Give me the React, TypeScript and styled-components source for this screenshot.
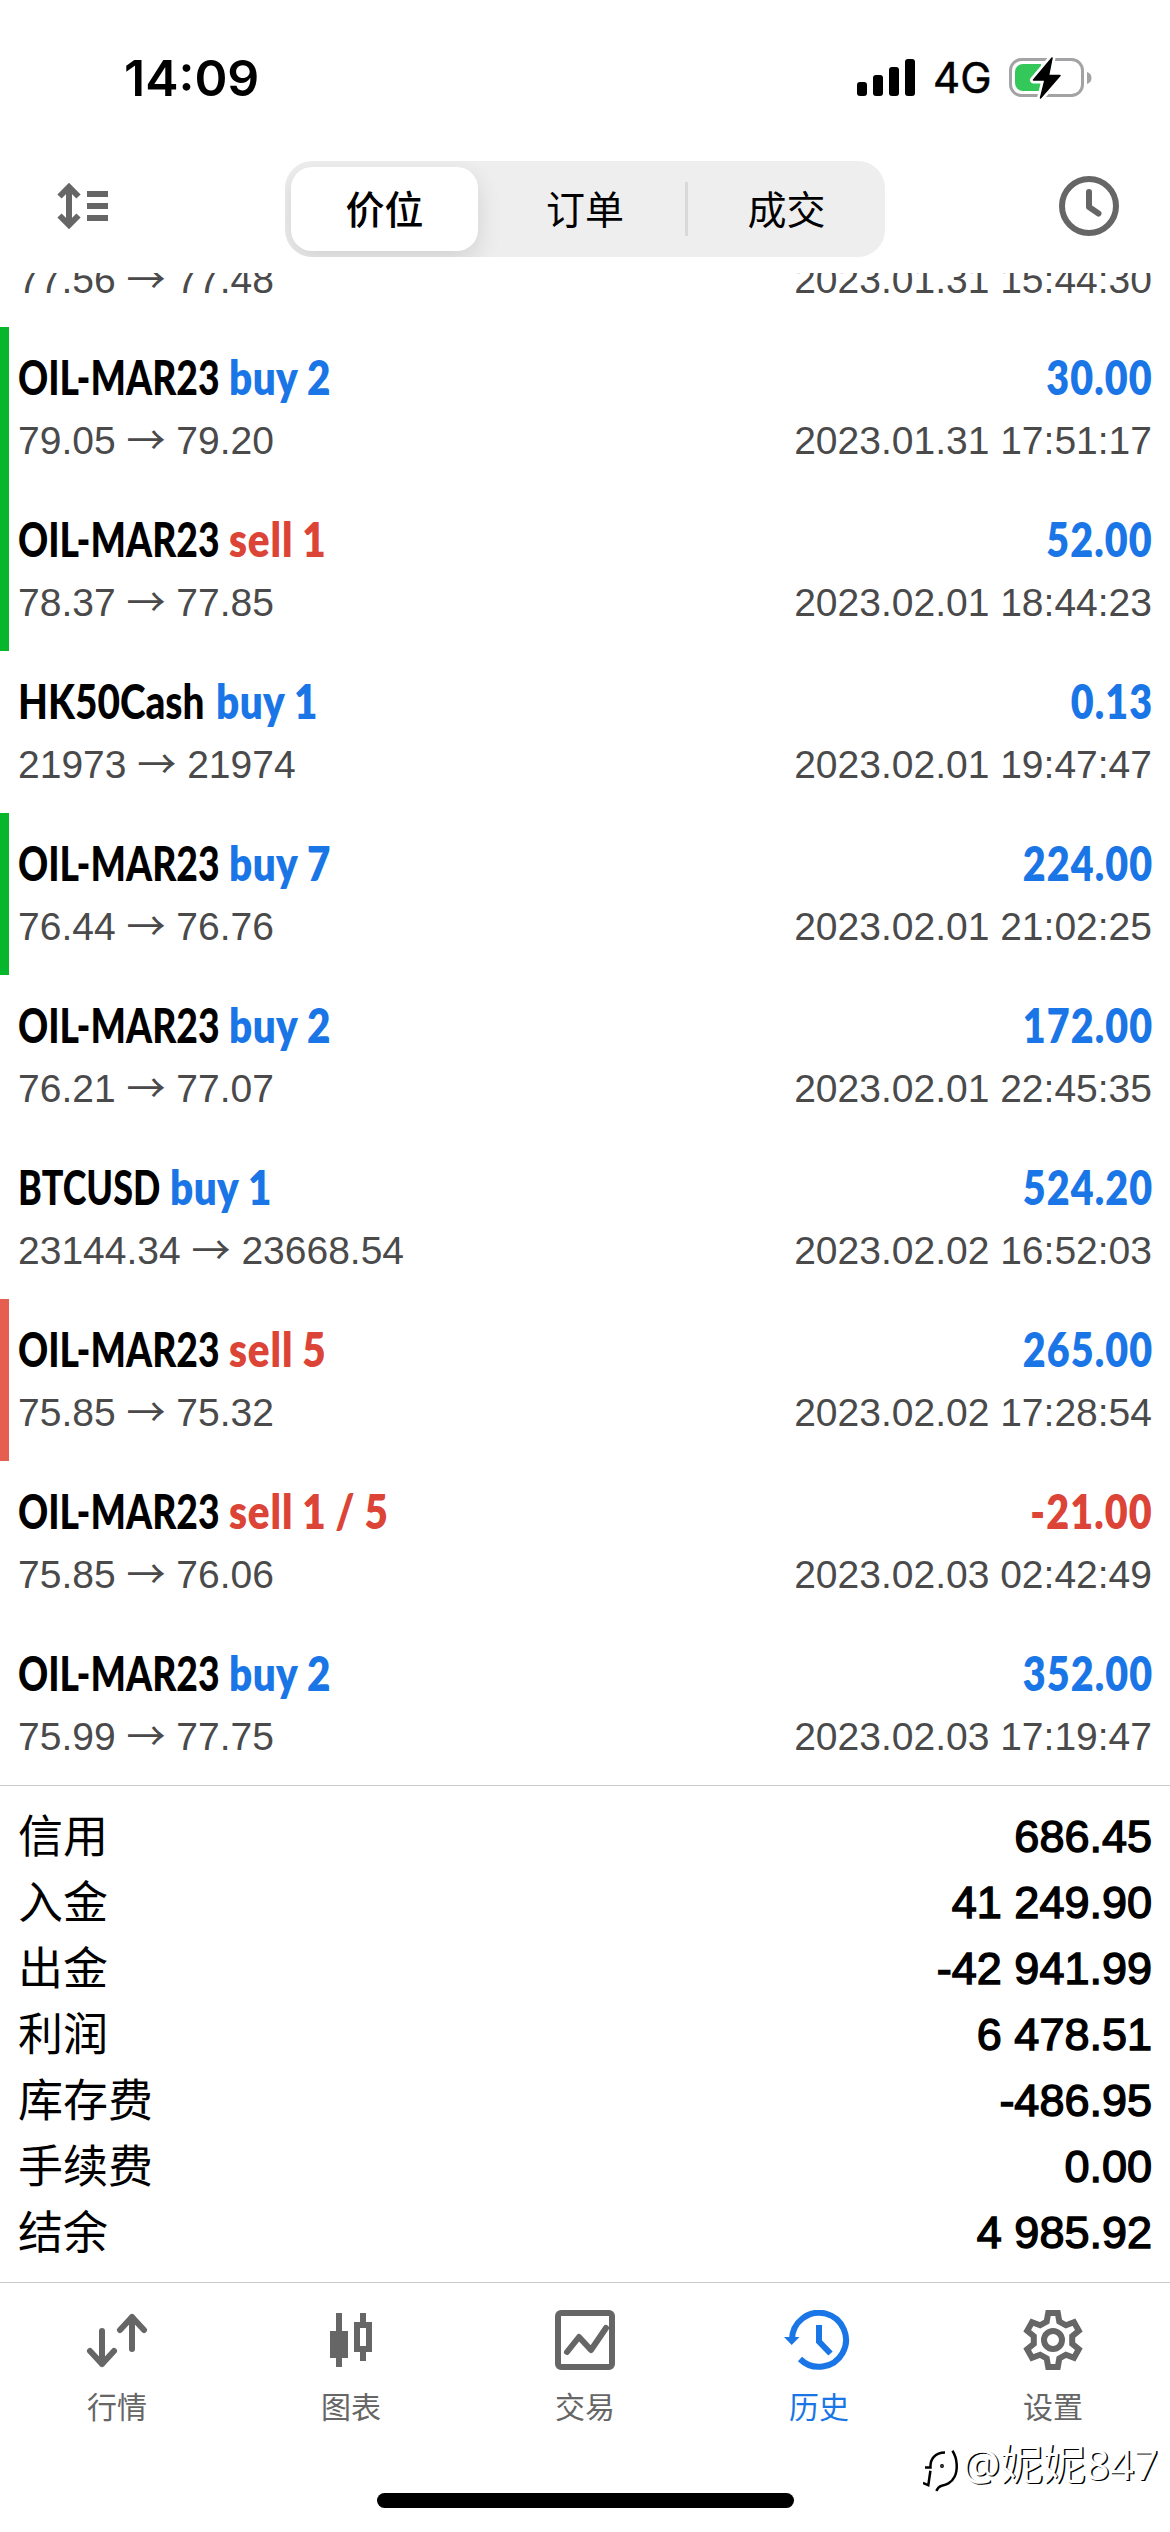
import React from 'react';
import styled, { createGlobalStyle } from 'styled-components';

const BLUE = '#1a76e6';
const RED = '#db4437';
const GREY = '#666666';
const CJK = '"Noto Sans CJK SC", sans-serif';
const HELV = '"Liberation Sans", "Noto Sans CJK SC", sans-serif';

const GlobalStyle = createGlobalStyle`
  * { box-sizing: border-box; }
  body { margin: 0; background: #fff; }
`;

const Screen = styled.div`
  position: relative;
  display: flex;
  flex-direction: column;
  width: 1170px;
  height: 2532px;
  overflow: hidden;
  background: #fff;
  color: #000;
  font-family: ${HELV};
`;

const StatusBar = styled.header`
  display: flex;
  justify-content: space-between;
  align-items: center;
  height: 156px;
  padding: 0 78px 0 124px;
  flex: none;
`;

const Clock = styled.div`
  font: 600 50px/60px Inter, sans-serif;
`;

const StatusIcons = styled.div`
  display: flex;
  align-items: center;
  gap: 18px;
`;

const Network = styled.span`
  width: 58px;
  font: 400 42px/52px Inter, sans-serif;
  -webkit-text-stroke: 0.5px #000;
`;

const Toolbar = styled.div`
  display: grid;
  grid-template-columns: 228px 600px 1fr;
  align-items: center;
  height: 117px;
  padding: 0 51px 11px 57px;
  flex: none;
`;

const ToolButton = styled.button<{ $end?: boolean }>`
  display: flex;
  justify-self: ${p => (p.$end ? 'end' : 'start')};
  margin: 0 0 6px;
  padding: 0;
  border: 0;
  background: none;
`;

const Segments = styled.div`
  display: flex;
  width: 600px;
  height: 96px;
  border-radius: 27px;
  background: #eeeeef;
  overflow: hidden;
  align-items: center;
`;

const Segment = styled.button<{ $active?: boolean; $divided?: boolean }>`
  display: flex;
  align-items: center;
  justify-content: center;
  width: ${p => (p.$active ? 187 : 200)}px;
  height: ${p => (p.$active ? 84 : 54)}px;
  margin: 0 ${p => (p.$active ? 7 : 0)}px 0 ${p => (p.$active ? 6 : 0)}px;
  padding: 0 0 3px;
  border: 0;
  border-left: ${p => (p.$divided ? '3px solid #d9d9da' : '0')};
  border-radius: ${p => (p.$active ? 21 : 0)}px;
  background: ${p => (p.$active ? '#fff' : 'transparent')};
  box-shadow: ${p => (p.$active ? '0 9px 24px rgba(0,0,0,.12)' : 'none')};
  color: #000;
  font: ${p => (p.$active ? 500 : 400)} 39px/51px ${CJK};
`;

const Deals = styled.main`
  display: flex;
  flex-direction: column;
  height: 1512px;
  overflow: hidden;
  flex: none;
`;

const Deal = styled.article<{ $mark?: string }>`
  display: flex;
  flex-direction: column;
  height: 162px;
  flex: none;
  padding: 20px 18px 0 9px;
  border-left: 9px solid ${p => p.$mark || 'transparent'};
`;

const ScrolledDeal = styled.article`
  display: flex;
  flex-direction: column;
  height: 54px;
  flex: none;
  padding: 0 18px;
  margin-top: -27px;
  margin-bottom: 27px;
`;

const DealHead = styled.div`
  display: flex;
  align-items: baseline;
  height: 60px;
  font: 900 47px/60px Lato, sans-serif;
  white-space: pre;
`;

const Symbol = styled.span<{ $width: number; $scale: number }>`
  width: ${p => p.$width}px;
  transform: scaleX(${p => p.$scale});
  transform-origin: left;
`;

const Side = styled.span<{ $sell: boolean }>`
  flex: 1;
  transform: scaleX(0.86);
  transform-origin: left;
  letter-spacing: ${p => (p.$sell ? 1 : 0.5)}px;
  word-spacing: ${p => (p.$sell ? -1.5 : 0)}px;
  font-weight: 800;
  color: ${p => (p.$sell ? RED : BLUE)};
`;

const Profit = styled.span<{ $loss: boolean }>`
  transform: scaleX(0.84);
  transform-origin: right;
  margin-right: -1px;
  letter-spacing: 1.3px;
  font-weight: 800;
  color: ${p => (p.$loss ? RED : BLUE)};
`;

const DealInfo = styled.div`
  display: flex;
  justify-content: space-between;
  height: 50px;
  margin-top: 9px;
  font: 400 39px/50px ${HELV};
  color: #4a4a4b;
`;

const Arrow = styled.span`
  font-family: ${CJK};
  line-height: 0;
`;

const Summary = styled.section`
  display: flex;
  flex-direction: column;
  height: 497px;
  padding: 18px 18px 0;
  border-top: 1px solid #c8cacc;
  flex: none;
`;

const SummaryRow = styled.div`
  display: flex;
  justify-content: space-between;
  height: 66px;
  line-height: 66px;
  font-size: 45px;
`;

const SummaryLabel = styled.span`
  line-height: 60px;
  font-family: ${CJK};
`;

const SummaryValue = styled.span`
  -webkit-text-stroke: 1.4px #000;
`;

const TabBar = styled.nav`
  display: flex;
  height: 250px;
  border-top: 1px solid #c8cacc;
  flex: none;
`;

const Tab = styled.button<{ $active?: boolean }>`
  display: flex;
  flex-direction: column;
  align-items: center;
  width: 234px;
  padding: 27px 0 0;
  border: 0;
  background: none;
  color: ${p => (p.$active ? BLUE : GREY)};
  font: 400 30px/40px ${CJK};
`;

const TabLabel = styled.span`
  margin-top: 15px;
`;

const HomeIndicator = styled.div`
  position: absolute;
  left: 377px;
  bottom: 24px;
  width: 417px;
  height: 15px;
  border-radius: 8px;
  background: #000;
`;

const Watermark = styled.div`
  position: absolute;
  left: 923px;
  bottom: 38px;
  display: flex;
  align-items: flex-end;
  gap: 2px;
  color: #fff;
  font: 400 42.500px/60px "Noto Sans", ${CJK};
  text-shadow: 1.5px 1px 0 #000;
`;

const SignalIcon = () => (
  <svg width="58" height="38" viewBox="0 0 58 38">
    <rect x="0" y="23" width="10" height="14" rx="3" />
    <rect x="16" y="16" width="10" height="21" rx="3" />
    <rect x="32" y="8" width="10" height="29" rx="3" />
    <rect x="48" y="0" width="10" height="37" rx="3" />
  </svg>
);

const BatteryIcon = () => (
  <svg width="83" height="42" viewBox="0 0 83 42">
    <rect x="1.5" y="2.5" width="72" height="36" rx="11" fill="none" stroke="#a3a3a5" strokeWidth="3" />
    <path d="M78 15c3 1 4.500 3 4.500 6s-1.500 5-4.500 6z" fill="#a3a3a5" />
    <path d="M14 7h18v27H14a8 8 0 0 1-8-8V15a8 8 0 0 1 8-8z" fill="#34c759" />
    <path d="M43 1L24.500 23H36L31.500 41L51 18.500H39.500L43 1z" fill="#000" stroke="#fff" strokeWidth="7" strokeLinejoin="round" paintOrder="stroke" />
    <path d="M43 1L24.500 23H36L31.500 41L51 18.500H39.500L43 1z" stroke="#000" strokeWidth="1.500" strokeLinejoin="round" />
  </svg>
);

const SortIcon = () => (
  <svg width="51" height="48" viewBox="0 0 51 48" fill="none" stroke={GREY} strokeWidth="6">
    <path d="M12 5V43M2.500 14.500L12 5L21.500 14.500M2.500 33.500L12 43L21.500 33.500M30 12H51M30 24H51M30 36H51" />
  </svg>
);

const ClockIcon = () => (
  <svg width="60" height="60" viewBox="0 0 60 60" fill="none" stroke={GREY} strokeWidth="6">
    <circle cx="30" cy="30" r="27" />
    <path d="M30 16V31L39.500 37.500" strokeLinecap="round" strokeLinejoin="round" />
  </svg>
);

const QuotesIcon = () => (
  <svg width="62" height="60" viewBox="0 0 62 60" fill="none" stroke="currentColor" strokeWidth="6" strokeLinecap="round" strokeLinejoin="round">
    <path d="M16 21V54M4 41L16 54L28 41M46 39V7M34 20L46 7L58 20" />
  </svg>
);

const ChartIcon = () => (
  <svg width="60" height="60" viewBox="0 0 60 60" fill="currentColor">
    <path d="M15 3h6v18h6v27h-6v9h-6v-9H9V21h6z" />
    <path fillRule="evenodd" d="M39 3h6v9h6v30h-6v9h-6v-9h-6V12h6zM39 18v18h6V18z" />
  </svg>
);

const TradeIcon = () => (
  <svg width="60" height="60" viewBox="0 0 60 60" fill="none" stroke="currentColor" strokeWidth="6" strokeLinejoin="round">
    <rect x="3" y="3" width="54" height="54" rx="3" />
    <path d="M12 42L24 27L36 40L51 18" strokeLinecap="round" />
  </svg>
);

const HistoryIcon = () => (
  <svg width="70" height="60" viewBox="0 0 70 60" fill="none" stroke="currentColor" strokeWidth="6">
    <path d="M8 30A27 27 0 1 1 16 49" />
    <path d="M35 15V31.500L46.500 43.500" />
    <path d="M0 27H15.500L7.700 35z" fill="currentColor" stroke="none" />
  </svg>
);

const GearIcon = () => (
  <svg width="60" height="60" viewBox="-30 -30 60 60" fill="none" stroke="currentColor" strokeWidth="6">
    <path d="M-4.800-27L4.800-27L6.300-18.500L12.900-14.700L21-17.700L25.800-9.300L19.200-3.800L19.200 3.800L25.800 9.300L21 17.700L12.900 14.700L6.300 18.500L4.800 27L-4.800 27L-6.300 18.500L-12.900 14.700L-21 17.700L-25.800 9.300L-19.200 3.800L-19.200-3.800L-25.800-9.300L-21-17.700L-12.900-14.700L-6.300-18.500z" />
    <circle cx="0" cy="0" r="9" />
  </svg>
);

const CommunityIcon = () => (
  <svg width="37" height="46" viewBox="0 0 37 46" fill="none" stroke="#000" strokeWidth="2.500">
    <path d="M2 19.500H7.500C7 11 12 4.500 22 4.500M7.400 22.700L5.300 37.300L0 35" />
    <path d="M29.400 2.700C35 11 34.500 23 31.700 28.500C28 36 22 37 18 38C15 39 14.500 40.500 13.400 43" />
    <circle cx="19" cy="18" r="0.700" />
  </svg>
);

interface DealData {
  symbol: string;
  side: string;
  profit: string;
  open: string;
  close: string;
  time: string;
  mark?: string;
}

const GREEN_MARK = '#08b62b';
const RED_MARK = '#e55e50';

const deals: DealData[] = [
  { symbol: 'OIL-MAR23', side: 'buy 2', profit: '30.00', open: '79.05', close: '79.20', time: '2023.01.31 17:51:17', mark: GREEN_MARK },
  { symbol: 'OIL-MAR23', side: 'sell 1', profit: '52.00', open: '78.37', close: '77.85', time: '2023.02.01 18:44:23', mark: GREEN_MARK },
  { symbol: 'HK50Cash', side: 'buy 1', profit: '0.13', open: '21973', close: '21974', time: '2023.02.01 19:47:47' },
  { symbol: 'OIL-MAR23', side: 'buy 7', profit: '224.00', open: '76.44', close: '76.76', time: '2023.02.01 21:02:25', mark: GREEN_MARK },
  { symbol: 'OIL-MAR23', side: 'buy 2', profit: '172.00', open: '76.21', close: '77.07', time: '2023.02.01 22:45:35' },
  { symbol: 'BTCUSD', side: 'buy 1', profit: '524.20', open: '23144.34', close: '23668.54', time: '2023.02.02 16:52:03' },
  { symbol: 'OIL-MAR23', side: 'sell 5', profit: '265.00', open: '75.85', close: '75.32', time: '2023.02.02 17:28:54', mark: RED_MARK },
  { symbol: 'OIL-MAR23', side: 'sell 1 / 5', profit: '-21.00', open: '75.85', close: '76.06', time: '2023.02.03 02:42:49' },
  { symbol: 'OIL-MAR23', side: 'buy 2', profit: '352.00', open: '75.99', close: '77.75', time: '2023.02.03 17:19:47' },
];

const SYMBOLS: Record<string, { width: number; scale: number }> = {
  'OIL-MAR23': { width: 211, scale: 0.793 },
  HK50Cash: { width: 198, scale: 0.825 },
  BTCUSD: { width: 152, scale: 0.765 },
};

const totals = [
  ['信用', '686.45'],
  ['入金', '41 249.90'],
  ['出金', '-42 941.99'],
  ['利润', '6 478.51'],
  ['库存费', '-486.95'],
  ['手续费', '0.00'],
  ['结余', '4 985.92'],
];

const tabs = [
  { label: '行情', icon: <QuotesIcon /> },
  { label: '图表', icon: <ChartIcon /> },
  { label: '交易', icon: <TradeIcon /> },
  { label: '历史', icon: <HistoryIcon />, active: true },
  { label: '设置', icon: <GearIcon /> },
];

const Prices = ({ open, close, time }: { open: string; close: string; time: string }) => (
  <DealInfo>
    <span>
      {open} <Arrow>→</Arrow> {close}
    </span>
    <span>{time}</span>
  </DealInfo>
);

export default function App() {
  return (
    <Screen>
      <GlobalStyle />
      <StatusBar>
        <Clock>14:09</Clock>
        <StatusIcons>
          <SignalIcon />
          <Network>4G</Network>
          <BatteryIcon />
        </StatusIcons>
      </StatusBar>
      <Toolbar>
        <ToolButton>
          <SortIcon />
        </ToolButton>
        <Segments>
          <Segment $active>价位</Segment>
          <Segment>订单</Segment>
          <Segment $divided>成交</Segment>
        </Segments>
        <ToolButton $end>
          <ClockIcon />
        </ToolButton>
      </Toolbar>
      <Deals>
        <ScrolledDeal>
          <Prices open="77.56" close="77.48" time="2023.01.31 15:44:30" />
        </ScrolledDeal>
        {deals.map(d => (
          <Deal key={d.time} $mark={d.mark}>
            <DealHead>
              <Symbol $width={SYMBOLS[d.symbol].width} $scale={SYMBOLS[d.symbol].scale}>
                {d.symbol}
              </Symbol>
              <Side $sell={d.side.startsWith('sell')}>{d.side}</Side>
              <Profit $loss={d.profit.startsWith('-')}>{d.profit}</Profit>
            </DealHead>
            <Prices open={d.open} close={d.close} time={d.time} />
          </Deal>
        ))}
      </Deals>
      <Summary>
        {totals.map(([label, value]) => (
          <SummaryRow key={label}>
            <SummaryLabel>{label}</SummaryLabel>
            <SummaryValue>{value}</SummaryValue>
          </SummaryRow>
        ))}
      </Summary>
      <TabBar>
        {tabs.map(t => (
          <Tab key={t.label} $active={t.active}>
            {t.icon}
            <TabLabel>{t.label}</TabLabel>
          </Tab>
        ))}
      </TabBar>
      <HomeIndicator />
      <Watermark>
        <CommunityIcon />
        <span>@妮妮847</span>
      </Watermark>
    </Screen>
  );
}
